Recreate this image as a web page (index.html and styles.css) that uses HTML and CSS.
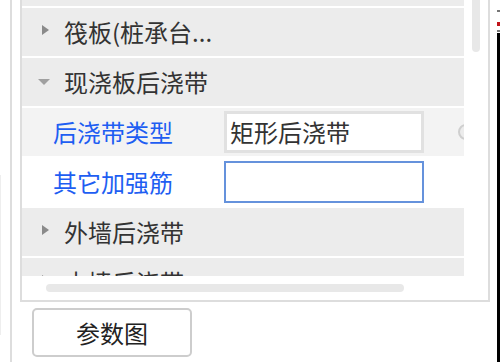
FILE: index.html
```html
<!doctype html>
<html>
<head>
	<title>后浇带属性</title>
	<link rel="stylesheet" href="styles.css">
</head>
<body>
<div class="edge"><div class="edge-mark"></div></div>
<div class="divider"></div>
<div class="main">
	<div class="panel">
		<div class="panel-body">
			<div class="viewport">
				<div class="list">
					<div class="group"><span class="arrow right"></span><span class="name"></span></div>
					<div class="group"><span class="arrow right"></span><span class="name">筏板(桩承台...</span></div>
					<div class="group"><span class="arrow down"></span><span class="name">现浇板后浇带</span></div>
					<div class="prop shaded">
						<span class="label">后浇带类型</span>
						<div class="field">矩形后浇带</div>
						<span class="knob"></span>
					</div>
					<div class="prop">
						<span class="label">其它加强筋</span>
						<div class="field active"></div>
					</div>
					<div class="group"><span class="arrow right"></span><span class="name">外墙后浇带</span></div>
					<div class="group"><span class="arrow right"></span><span class="name">内墙后浇带</span></div>
				</div>
			</div>
			<div class="vscroll"><div class="vthumb"></div></div>
		</div>
		<div class="hscroll"><div class="hthumb"></div></div>
	</div>
	<button class="btn">参数图</button>
</div>
<div class="strip">
	<div class="strip-gap"></div>
	<div class="strip-line"></div>
	<div class="strip-gap"></div>
	<div class="strip-red"></div>
	<div class="strip-gap short"></div>
	<div class="strip-line"></div>
	<div class="strip-black"></div>
</div>
</body>
</html>
```

FILE: styles.css
```css
* {
    margin: 0;
    padding: 0;
    box-sizing: border-box;
}

body {
    display: flex;
    width: 500px;
    height: 362px;
    overflow: hidden;
    background: #fff;
    font: 24px/1 "Noto Sans CJK SC", "Microsoft YaHei", sans-serif;
    color: #333;
}

.edge {
    width: 10px;
}

.edge-mark {
    width: 1px;
    height: 160px;
    margin-top: 175px;
    background: #eee;
}

.divider {
    width: 2px;
    background: #ddd;
}

.main {
    width: 478px;
    padding-left: 8px;
}

.panel {
    width: 470px;
    height: 302px;
    border: 2px solid #ddd;
    border-top: none;
}

.panel-body {
    display: flex;
    height: 276px;
}

.viewport {
    width: 442px;
    height: 276px;
    overflow: hidden;
}

.list {
    width: 620px;
    margin-top: -42px;
}

.group {
    display: flex;
    align-items: center;
    height: 48px;
    margin-bottom: 2px;
    padding-left: 16px;
    background: #ececec;
}

.arrow {
    width: 12px;
    display: flex;
}

.arrow.right::before {
    content: "";
    margin: -4px 0 0 4px;
    border-left: 7px solid #8a8a8a;
    border-top: 5px solid transparent;
    border-bottom: 5px solid transparent;
}

.arrow.down::before {
    content: "";
    margin-top: -1px;
    border-top: 6px solid #a0a0a0;
    border-left: 6px solid transparent;
    border-right: 6px solid transparent;
}

.name {
    margin-left: 14px;
}

.prop {
    display: flex;
    align-items: center;
    height: 48px;
    margin-bottom: 2px;
    padding-left: 31px;
}

.prop.shaded {
    background: #f3f3f3;
}

.label {
    width: 171px;
    color: #1e5ef2;
}

.field {
    width: 200px;
    height: 42px;
    padding: 6px 3px;
    border: 3px solid #e1e1e1;
    background: #fff;
}

.field.active {
    border: 2px solid #6592dc;
}

.knob {
    width: 16px;
    height: 16px;
    margin-left: 34px;
    border: 2px solid #cfcfcf;
    border-radius: 50%;
    background: #ececec;
}

.vscroll {
    width: 24px;
    padding-left: 8px;
}

.vthumb {
    width: 8px;
    height: 52px;
    border-radius: 0 0 4px 4px;
    background: #e8e8e8;
}

.hscroll {
    height: 24px;
    padding: 8px 0 0 24px;
}

.hthumb {
    width: 358px;
    height: 8px;
    border-radius: 4px;
    background: #e8e8e8;
}

.btn {
    display: block;
    width: 160px;
    height: 49px;
    margin: 6px 0 0 12px;
    border: 2px solid #cdcdcd;
    border-radius: 5px;
    background: #fff;
    font: 24px/1 "Noto Sans CJK SC", "Microsoft YaHei", sans-serif;
    color: #222;
}

.strip {
    display: flex;
    flex-direction: column;
    width: 3px;
    margin-left: 7px;
}

.strip-gap {
    height: 10px;
}

.strip-gap.short {
    height: 4px;
}

.strip-line {
    height: 2px;
    background: #777;
}

.strip-red {
    height: 4px;
    background: #c0141a;
}

.strip-black {
    flex: 1;
    margin-top: 1px;
    background: #000;
}
```
